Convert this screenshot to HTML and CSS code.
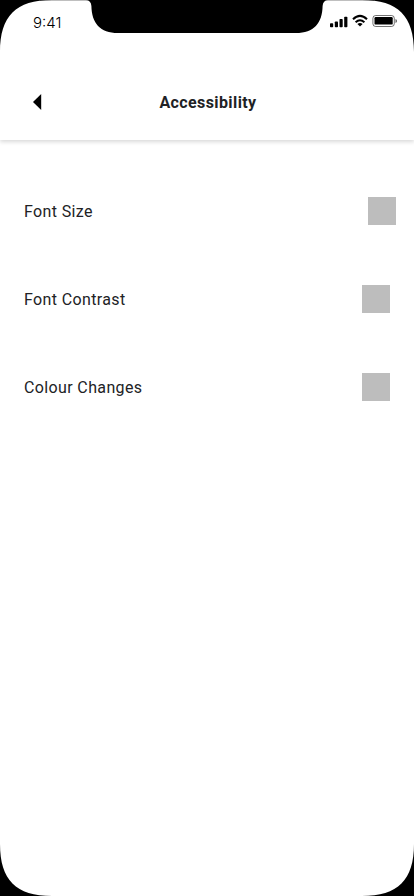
FILE: index.html
```html
<!DOCTYPE html>
<html lang="en">
<head>
<meta charset="utf-8">
<title>Accessibility</title>
<link rel="stylesheet" href="styles.css">
</head>
<body>
<main class="phone">
  <header class="header">
    <div class="status">
      <span class="time">9:41</span>
      <svg class="signals" width="70" height="16" viewBox="0 0 70 16">
        <rect x="0" y="9.3" width="3.2" height="4" rx=".8"/>
        <rect x="4.8" y="7.5" width="3.2" height="5.8" rx=".8"/>
        <rect x="9.5" y="5" width="3.2" height="8.3" rx=".8"/>
        <rect x="14.2" y="2.8" width="3.2" height="10.5" rx=".8"/>
        <g fill="none" stroke="#000" stroke-width="2">
          <path d="M23 5.3Q30 -1.5 37 5.3"/>
          <path d="M25.6 8.2Q30 4.2 34.4 8.2"/>
        </g>
        <path d="M27.4 10Q30 8.1 32.6 10L30 12.5Z"/>
        <rect x="42.9" y="1.5" width="21.4" height="11" rx="2.8" fill="none" stroke="#000" stroke-opacity=".55"/>
        <rect x="44.5" y="3" width="18.2" height="7.6" rx="1.2"/>
        <path d="M65.5 5Q67 5.6 67 7T65.5 9Z" opacity=".65"/>
      </svg>
    </div>
    <div class="nav">
      <svg class="back" width="9" height="16" viewBox="0 0 9 16"><path d="M8.2 0V16L0 8Z"/></svg>
      <h1 class="title"><span>Accessibility</span></h1>
    </div>
  </header>
  <section class="options">
    <div class="row row-wide"><span class="label">Font Size</span><i class="box"></i></div>
    <div class="row"><span class="label">Font Contrast</span><i class="box"></i></div>
    <div class="row"><span class="label">Colour Changes</span><i class="box"></i></div>
  </section>
  <svg class="frame" width="414" height="896" viewBox="0 0 414 896">
    <path d="M0 0H52C16 0 0 16 0 52Z"/>
    <path d="M414 0H362C398 0 414 16 414 52Z"/>
    <path d="M0 896H52C16 896 0 880 0 844Z"/>
    <path d="M414 896H362C398 896 414 880 414 844Z"/>
    <path d="M40 0H374V.3H328Q323 .3 322.6 6C322.3 23 314 33 296 33H118C100 33 91.7 23 91.4 6Q91 .3 86 .3H40Z"/>
  </svg>
</main>
</body>
</html>
```
FILE: styles.css
```css
* { box-sizing: border-box; }
body { margin: 0; background: #000; }
.phone {
  position: relative;
  width: 414px;
  height: 896px;
  overflow: hidden;
  background: #fff;
  color: #212225;
  font: 16px/24px Roboto, "Liberation Sans", sans-serif;
}
.header { height: 140px; background: #fff; box-shadow: 0 2px 4px rgba(0, 0, 0, .15); }
.status { display: flex; justify-content: space-between; height: 44px; padding: 14px 14px 0 33px; }
.time { color: #000; font: 300 15px/18px Inter, sans-serif; }
.signals { display: block; }
.nav { display: flex; align-items: center; height: 116px; padding: 0 33px; }
.back { flex: none; }
.title { flex: 1; margin: 0 7px 0 0; padding-top: 2px; text-align: center; font-size: 16px; line-height: 24px; font-weight: 700; }
.title span { letter-spacing: .4px; }
.options { padding-top: 27px; }
.row { display: flex; align-items: center; justify-content: space-between; height: 88px; padding: 0 24px; }
.row-wide { padding-right: 18px; }
.box { width: 28px; height: 28px; background: #bdbdbd; }
.label { padding-top: 2px; letter-spacing: .37px; }
.frame { position: absolute; inset: 0; pointer-events: none; }
```
